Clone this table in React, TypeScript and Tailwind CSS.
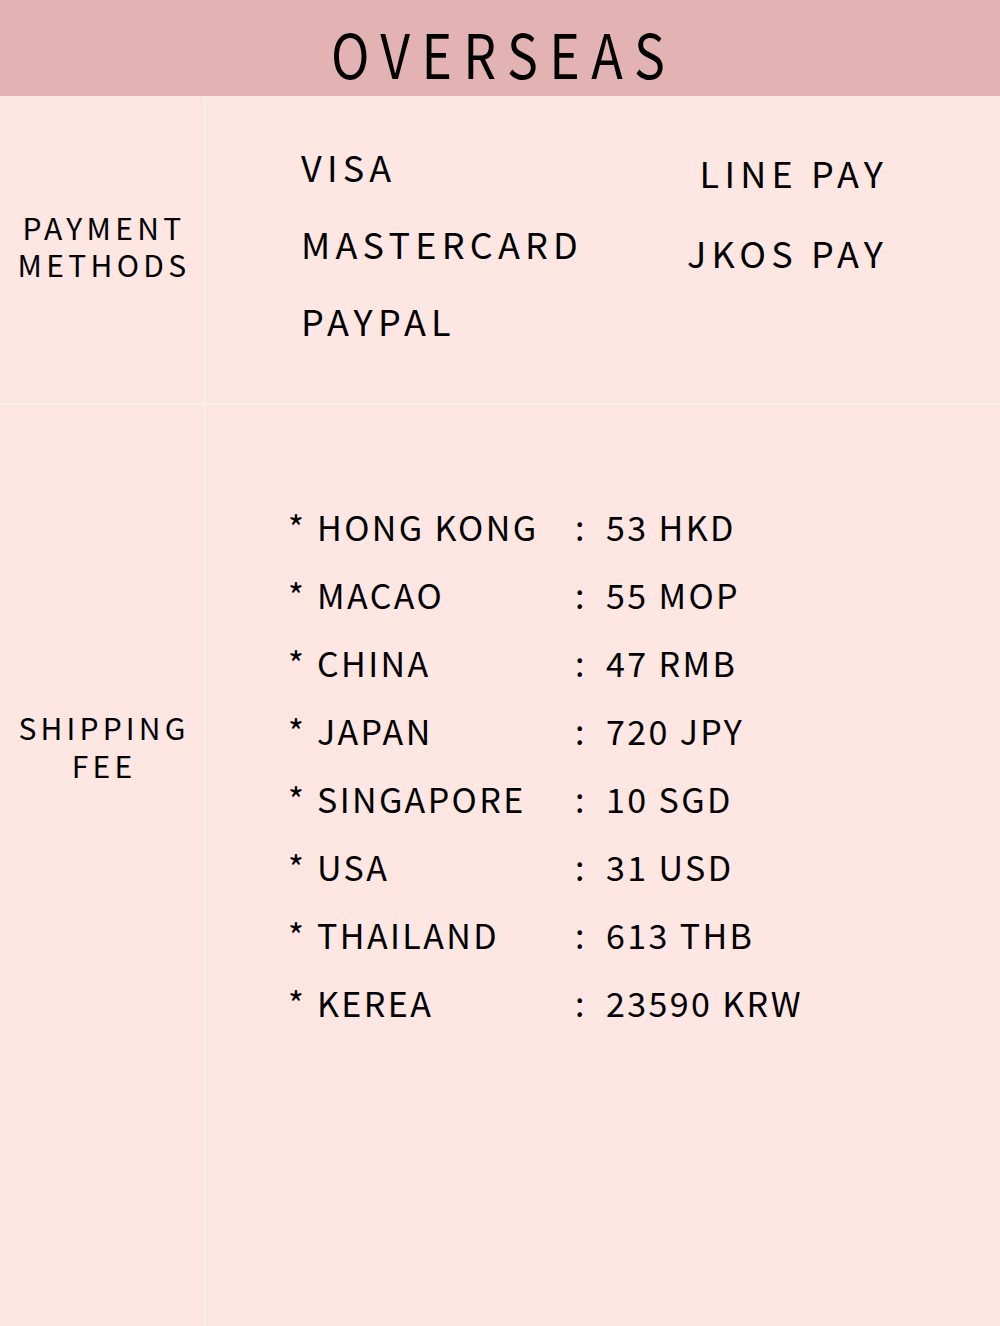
import React from "react";

const rows: [string, string][] = [
  ["HONG KONG", "53 HKD"],
  ["MACAO", "55 MOP"],
  ["CHINA", "47 RMB"],
  ["JAPAN", "720 JPY"],
  ["SINGAPORE", "10 SGD"],
  ["USA", "31 USD"],
  ["THAILAND", "613 THB"],
  ["KEREA", "23590 KRW"],
];

export default function App() {
  return (
    <div className="w-[1000px] h-[1326px] bg-[#fee6e3] text-black flex flex-col overflow-hidden font-['Noto_Sans_CJK_TC',sans-serif]">
      <div className="h-[96px] bg-[#e3b3b3] flex items-center justify-center shrink-0">
        <div className="text-[61px] leading-none tracking-[0.22em] scale-x-[0.85] pl-[8px] mt-[8px] font-normal">
          OVERSEAS
        </div>
      </div>
      <div className="grid grid-cols-[205px_1fr] grid-rows-[308px_1fr] flex-1">
        <div className="border-r-[1.5px] border-b-[1.5px] border-[#fff4f2] flex flex-col items-center justify-center pb-[8px]">
          <div className="text-[30px] leading-[37px] tracking-[0.145em] text-center pl-[4px]">
            <div>PAYMENT</div>
            <div>METHODS</div>
          </div>
        </div>
        <div className="border-b-[1.5px] border-[#fff4f2] flex justify-between pr-[112px]">
          <div className="pl-[96px] pt-[32px] text-[36px] tracking-[0.145em]">
            <div className="leading-[77px]">VISA</div>
            <div className="leading-[77px]">MASTERCARD</div>
            <div className="leading-[77px]">PAYPAL</div>
          </div>
          <div className="pt-[36px] text-[36px] tracking-[0.145em] text-right">
            <div className="leading-[80px]">LINE PAY</div>
            <div className="leading-[80px]">JKOS PAY</div>
          </div>
        </div>
        <div className="border-r-[1.5px] border-[#fff4f2] flex flex-col items-center pt-[304px]">
          <div className="text-[30px] leading-[38px] tracking-[0.14em] text-center pl-[4px]">
            <div>SHIPPING</div>
            <div>FEE</div>
          </div>
        </div>
        <div className="pt-[88px] pl-[83px]">
          {rows.map(([c, v]) => (
            <div key={c} className="flex h-[68px] items-center text-[34px] tracking-[0.07em]">
              <span className="w-[29px]">*</span>
              <span className="w-[258px]">{c}</span>
              <span className="w-[31px]">:</span>
              <span>{v}</span>
            </div>
          ))}
        </div>
      </div>
    </div>
  );
}
